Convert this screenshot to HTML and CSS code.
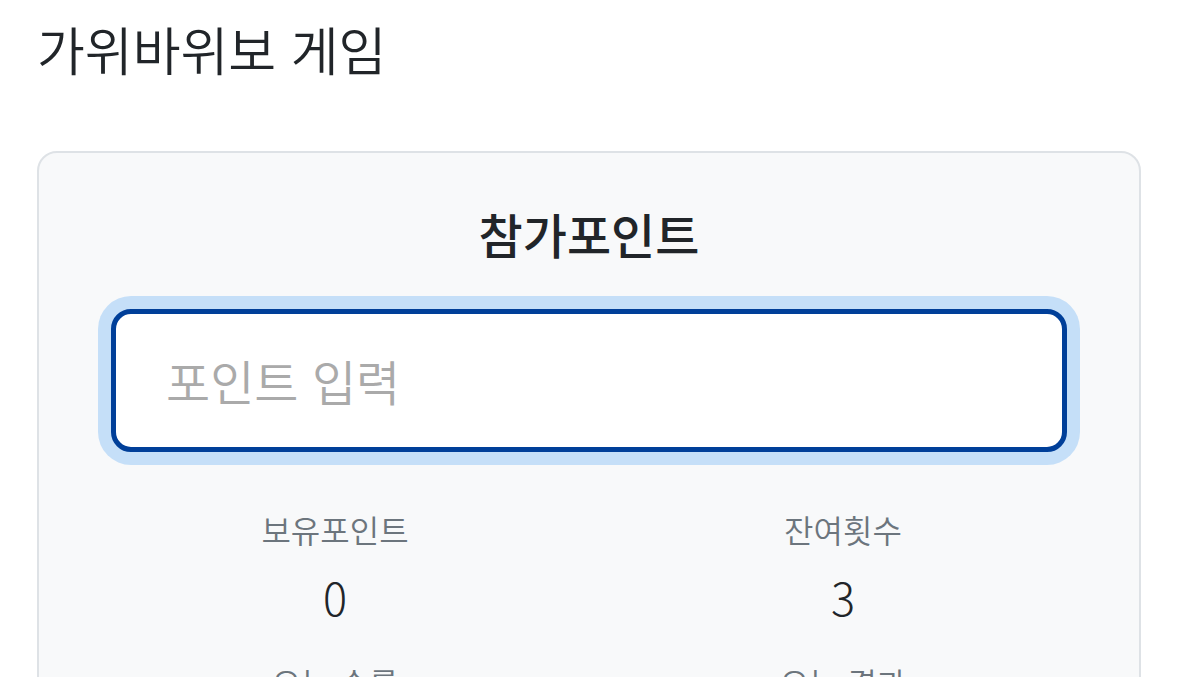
FILE: index.html
```html
<!DOCTYPE html>
<html lang="ko">
<head>
<meta charset="utf-8">
<title>가위바위보 게임</title>
<link rel="stylesheet" href="styles.css">
</head>
<body>
<main class="page">
  <h1 class="title">가위바위보 게임</h1>
  <section class="card">
    <h2 class="card-title">참가포인트</h2>
    <input class="point-input" type="text" placeholder="포인트 입력" autofocus>
    <div class="stats">
      <div class="stat">
        <div class="stat-label">보유포인트</div>
        <div class="stat-value">0</div>
      </div>
      <div class="stat">
        <div class="stat-label">잔여횟수</div>
        <div class="stat-value">3</div>
      </div>
      <div class="stat">
        <div class="stat-label">오늘 승률</div>
        <div class="stat-value">0%</div>
      </div>
      <div class="stat">
        <div class="stat-label">오늘 결과</div>
        <div class="stat-value">-</div>
      </div>
    </div>
  </section>
</main>
</body>
</html>
```

FILE: styles.css
```css
* { box-sizing: border-box; }
html, body { margin: 0; padding: 0; background: #ffffff; }
body {
  font-family: "Noto Sans CJK KR", "Noto Sans", sans-serif;
  color: #212529;
}
.page {
  padding: 18px 38px 0 37px;
}
.title {
  margin: 0 0 71px 0;
  font-size: 52px;
  font-weight: 350;
  line-height: 1.2;
  color: #212529;
}
.card {
  background: #f8f9fa;
  border: 2px solid #dee2e6;
  border-radius: 20px;
  padding: 52px 72px 40px;
}
.card-title {
  margin: 0 0 46px 0;
  text-align: center;
  font-size: 48px;
  font-weight: 500;
  line-height: 1.2;
  color: #212529;
}
.point-input {
  display: block;
  width: 100%;
  height: 143px;
  padding: 0 50px;
  font-family: inherit;
  font-size: 48px;
  font-weight: 350;
  color: #212529;
  background: #ffffff;
  border: 5px solid #003f99;
  border-radius: 20px;
  box-shadow: 0 0 0 13px #c5dff8;
  outline: none;
}
.point-input::placeholder { color: #aaaaaa; }
.stats {
  display: grid;
  grid-template-columns: 1fr 1fr;
  margin: 57px -30px 0;
  row-gap: 38px;
}
.stat {
  text-align: center;
}
.stat-label {
  font-size: 32px;
  font-weight: 350;
  line-height: 1.3;
  color: #6c757d;
}
.stat-value {
  margin-top: 19px;
  font-size: 45px;
  font-weight: 300;
  line-height: 1.2;
  color: #212529;
}
```
